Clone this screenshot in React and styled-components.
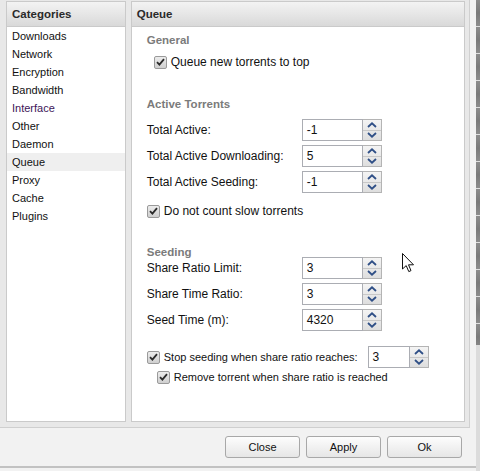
import styled, { createGlobalStyle } from "styled-components";

const Global = createGlobalStyle`
  html, body {
    margin: 0;
    padding: 0;
    width: 480px;
    height: 471px;
    overflow: hidden;
    background: #d8d8d8;
    font-family: "Liberation Sans", Arial, sans-serif;
  }
`;

const Screen = styled.div`
  display: flex;
  width: 480px;
  height: 471px;
  position: relative;
`;

const Dialog = styled.div`
  width: 476px;
  height: 471px;
  display: flex;
  flex-direction: column;
  background: #f2f2f2;
`;

const Edge = styled.div`
  flex: 1;
  background:
    linear-gradient(to bottom, transparent 0, transparent 345px, #dcdcdc 345px),
    repeating-linear-gradient(
      to bottom,
      #8c8c8c 0,
      #7a7a7a 13px,
      #8c8c8c 26px,
      #e0e0e0 26px,
      #e0e0e0 27px
    );
`;

const Main = styled.div`
  width: 470px;
  height: 428px;
  box-sizing: border-box;
  padding: 1px 4px 5px 6px;
  background: #e8e8e8;
  border-right: 1px solid #d0d0d0;
  border-bottom: 1px solid #cfcfcf;
  display: flex;
  gap: 5px;
`;

const Panel = styled.div`
  width: ${(p) => p.$width}px;
  box-sizing: border-box;
  height: 100%;
  background: #fff;
  border: 1px solid #cacaca;
  display: flex;
  flex-direction: column;
`;

const PanelHeader = styled.div`
  height: 25px;
  flex: none;
  box-sizing: border-box;
  display: flex;
  align-items: center;
  padding-left: ${(p) => p.$pad}px;
  background: linear-gradient(to bottom, #f3f3f3, #d9d9d9);
  border-bottom: 1px solid #cacaca;
  font-size: 11.5px;
  font-weight: bold;
  color: #2a2a2a;
`;

const CategoryList = styled.ul`
  list-style: none;
  margin: 0;
  padding: 0;
`;

const Category = styled.li`
  height: 18px;
  line-height: 18px;
  padding-left: 5px;
  font-size: 11px;
  color: ${(p) => (p.$visited ? "#3d1558" : "#111")};
  background: ${(p) => (p.$active ? "#efefef" : "transparent")};
`;

const Content = styled.div`
  padding: 5px 0 0 15px;
  display: flex;
  flex-direction: column;
`;

const Legend = styled.div`
  height: 16px;
  line-height: 16px;
  font-size: 11.5px;
  font-weight: bold;
  color: #7b7b7b;
  margin-top: ${(p) => p.$top || 0}px;
`;

const CheckRow = styled.label`
  display: flex;
  align-items: center;
  gap: 4px;
  height: ${(p) => p.$h || 20}px;
  margin-top: ${(p) => p.$top || 0}px;
  padding-left: ${(p) => p.$indent || 0}px;
  font-size: ${(p) => p.$size || 12}px;
  color: #111;
`;

const Box = styled.span`
  width: 13px;
  height: 13px;
  flex: none;
  box-sizing: border-box;
  border: 1px solid #9a9a9a;
  border-radius: 2px;
  background: linear-gradient(to bottom, #ececec, #cfcfcf);
  display: flex;
  align-items: center;
  justify-content: center;
`;

const FieldGrid = styled.div`
  display: grid;
  grid-template-columns: 155px auto;
  row-gap: 4px;
  align-items: center;
  justify-content: start;
  margin-top: ${(p) => p.$top || 0}px;
`;

const FieldLabel = styled.span`
  font-size: 12px;
  color: #111;
`;

const SpinWrap = styled.div`
  display: flex;
  height: 22px;
`;

const SpinInput = styled.div`
  width: ${(p) => p.$width}px;
  box-sizing: border-box;
  border: 1px solid #abadb3;
  background: #fff;
  font-size: 12px;
  line-height: 20px;
  padding-left: 4px;
  color: #111;
`;

const SpinButtons = styled.div`
  width: 19px;
  box-sizing: border-box;
  border: 1px solid #b4b4b4;
  border-left: none;
  display: flex;
  flex-direction: column;
  background: linear-gradient(to bottom, #f4f4f4, #dedede);
`;

const SpinHalf = styled.div`
  flex: 1;
  display: flex;
  align-items: center;
  justify-content: center;
  border-top: ${(p) => (p.$lower ? "1px solid #c8c8c8" : "none")};
`;

const InlineRow = styled.div`
  display: flex;
  align-items: center;
  margin-top: 15px;
  gap: 10px;
`;

const Footer = styled.div`
  height: 40px;
  box-sizing: border-box;
  border-bottom: 2px solid #c2c2c2;
  display: flex;
  align-items: center;
  justify-content: flex-end;
  gap: 6px;
  padding: 0 14px 1px 0;
`;

const Button = styled.button`
  width: 75px;
  height: 22px;
  box-sizing: border-box;
  border: 1px solid #a8a8a8;
  border-radius: 3px;
  background: linear-gradient(to bottom, #fdfdfd, #e6e6e6);
  font-family: "Liberation Sans", Arial, sans-serif;
  font-size: 11px;
  color: #111;
  padding: 0;
`;

const Pointer = styled.svg`
  position: absolute;
  left: 402px;
  top: 253px;
`;

function Check() {
  return (
    <Box>
      <svg width="9" height="8" viewBox="0 0 9 8">
        <path d="M1 4.2 L3.4 6.6 L8 1.2" fill="none" stroke="#2b2b2b" strokeWidth="1.8" />
      </svg>
    </Box>
  );
}

function Spinner({ value, width = 61 }) {
  return (
    <SpinWrap>
      <SpinInput $width={width}>{value}</SpinInput>
      <SpinButtons>
        <SpinHalf>
          <svg width="10" height="6" viewBox="0 0 10 6">
            <path d="M1 5 L5 1.3 L9 5" fill="none" stroke="#2f4f86" strokeWidth="1.8" />
          </svg>
        </SpinHalf>
        <SpinHalf $lower>
          <svg width="10" height="6" viewBox="0 0 10 6">
            <path d="M1 1 L5 4.7 L9 1" fill="none" stroke="#2f4f86" strokeWidth="1.8" />
          </svg>
        </SpinHalf>
      </SpinButtons>
    </SpinWrap>
  );
}

const categories = [
  "Downloads",
  "Network",
  "Encryption",
  "Bandwidth",
  "Interface",
  "Other",
  "Daemon",
  "Queue",
  "Proxy",
  "Cache",
  "Plugins",
];

const activeFields = [
  ["Total Active:", "-1"],
  ["Total Active Downloading:", "5"],
  ["Total Active Seeding:", "-1"],
];

const seedFields = [
  ["Share Ratio Limit:", "3"],
  ["Share Time Ratio:", "3"],
  ["Seed Time (m):", "4320"],
];

function Fields({ rows, top }) {
  return (
    <FieldGrid $top={top}>
      {rows.map(([label, value]) => [
        <FieldLabel key={label}>{label}</FieldLabel>,
        <Spinner key={label + "-spin"} value={value} />,
      ])}
    </FieldGrid>
  );
}

export default function App() {
  return (
    <Screen>
      <Global />
      <Dialog>
        <Main>
          <Panel $width={120}>
            <PanelHeader $pad={5}>Categories</PanelHeader>
            <CategoryList>
              {categories.map((c) => (
                <Category key={c} $active={c === "Queue"} $visited={c === "Interface"}>
                  {c}
                </Category>
              ))}
            </CategoryList>
          </Panel>
          <Panel $width={335}>
            <PanelHeader $pad={5}>Queue</PanelHeader>
            <Content>
              <Legend>General</Legend>
              <CheckRow $top={4} $indent={7}>
                <Check />
                Queue new torrents to top
              </CheckRow>

              <Legend $top={24}>Active Torrents</Legend>
              <Fields rows={activeFields} top={7} />
              <CheckRow $top={8}>
                <Check />
                Do not count slow torrents
              </CheckRow>

              <Legend $top={23}>Seeding</Legend>
              <Fields rows={seedFields} top={-3} />
              <InlineRow>
                <CheckRow $h={22} $size={11}>
                  <Check />
                  Stop seeding when share ratio reaches:
                </CheckRow>
                <Spinner value="3" width={42} />
              </InlineRow>
              <CheckRow $h={16} $top={1} $indent={10} $size={11}>
                <Check />
                Remove torrent when share ratio is reached
              </CheckRow>
            </Content>
          </Panel>
        </Main>
        <Footer>
          <Button>Close</Button>
          <Button>Apply</Button>
          <Button>Ok</Button>
        </Footer>
      </Dialog>
      <Edge />
      <Pointer width="13" height="20" viewBox="0 0 13 20">
        <path
          d="M0.5 0.5 L0.5 16 L4.2 12.6 L6.8 18.6 L9 17.6 L6.5 11.8 L11.5 11.8 Z"
          fill="#fff"
          stroke="#111"
          strokeWidth="1"
          strokeLinejoin="round"
        />
      </Pointer>
    </Screen>
  );
}
